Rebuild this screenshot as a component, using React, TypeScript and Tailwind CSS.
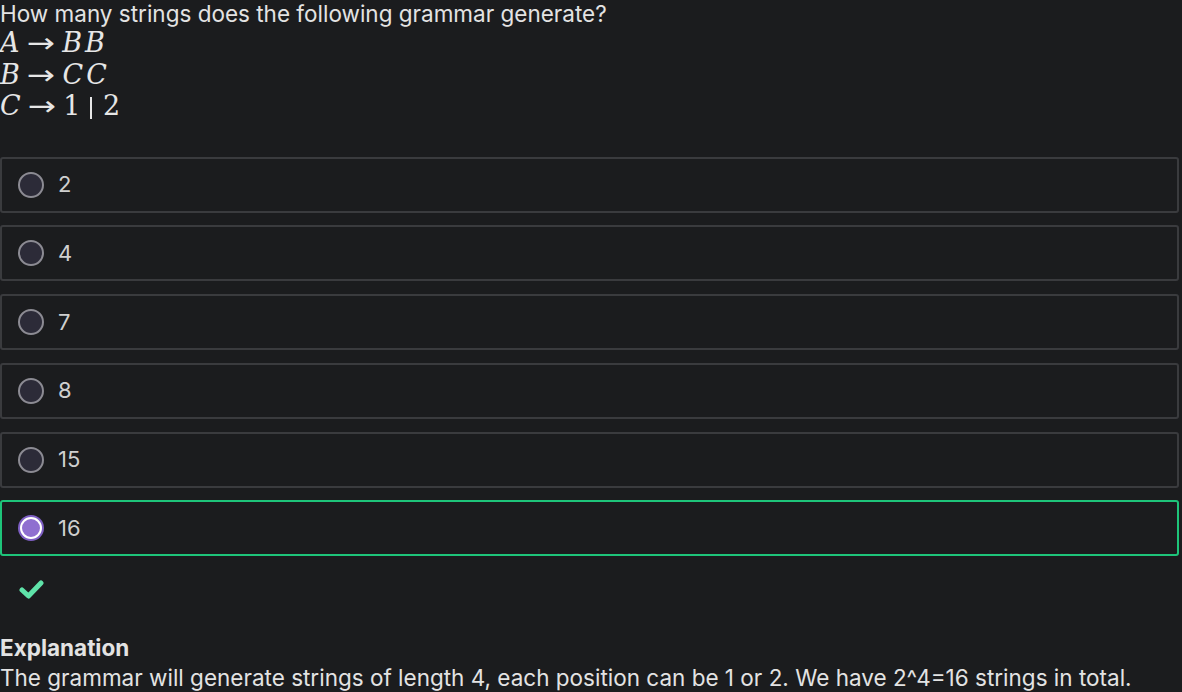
import React from "react";

const options = ["2", "4", "7", "8", "15", "16"];
const picked = "16";

const Arrow = () => (
  <span className="mx-[9px] inline-block scale-x-[1.25] not-italic" style={{ fontFamily: "'DejaVu Sans', sans-serif" }}>
    →
  </span>
);

const Radio = ({ checked }: { checked: boolean }) =>
  checked ? (
    <span className="flex h-[26px] w-[26px] shrink-0 items-center justify-center rounded-full bg-[#7e5fc4]">
      <span className="h-[22px] w-[22px] rounded-full border-2 border-white bg-[#8f6fd0]" />
    </span>
  ) : (
    <span className="h-[26px] w-[26px] shrink-0 rounded-full border-2 border-[#8c8b93] bg-[#2c2b38]" />
  );

export default function App() {
  return (
    <div
      className="min-h-[692px] w-full bg-[#1b1c1e] text-[#e3e3e3]"
      style={{ fontFamily: "Inter, Roboto, 'Liberation Sans', sans-serif" }}
    >
      <p className="text-[22.5px] leading-[27px]">How many strings does the following grammar generate?</p>

      {/* grammar rules */}
      <div
        className="text-[27px] leading-[31.5px] tracking-[1px] text-[#e6e6e6]"
        style={{ fontFamily: "'DejaVu Serif', 'Liberation Serif', serif" }}
      >
        <div className="flex items-center">
          <i>A</i>
          <Arrow />
          <i className="tracking-[3px]">BB</i>
        </div>
        <div className="flex items-center">
          <i>B</i>
          <Arrow />
          <i className="tracking-[3px]">CC</i>
        </div>
        <div className="flex items-center">
          <i>C</i>
          <Arrow />
          <span>1</span>
          <span className="ml-[9px] mr-[11px] inline-block h-[22px] w-[1.5px] translate-y-[2px] bg-[#e6e6e6]" />
          <span>2</span>
        </div>
      </div>

      <div className="mt-[35px] flex w-[1179px] flex-col gap-[12.8px]">
        {options.map((o) => (
          <div
            key={o}
            className={
              "flex h-14 items-center gap-[14px] rounded-[3px] border-2 pl-4 " +
              (o === picked ? "border-[#1ec47a]" : "border-[#3a3b3e]")
            }
          >
            <Radio checked={o === picked} />
            <span className="text-[22px] text-[#cfcfcf]">{o}</span>
          </div>
        ))}
      </div>

      <div className="pl-[19px] pt-[24px]">
        <svg width="25" height="19" viewBox="0 0 25 19">
          <polyline
            points="3,10 9.5,16 22,3"
            fill="none"
            stroke="#5fe3a9"
            strokeWidth="5"
            strokeLinecap="round"
            strokeLinejoin="round"
          />
        </svg>
      </div>

      <div className="pt-[34px]">
        <p className="text-[22.5px] font-bold leading-[30px]">Explanation</p>
        <p className="text-[22.5px] leading-[30px]">
          The grammar will generate strings of length 4, each position can be 1 or 2. We have 2^4=16 strings in total.
        </p>
      </div>
    </div>
  );
}
